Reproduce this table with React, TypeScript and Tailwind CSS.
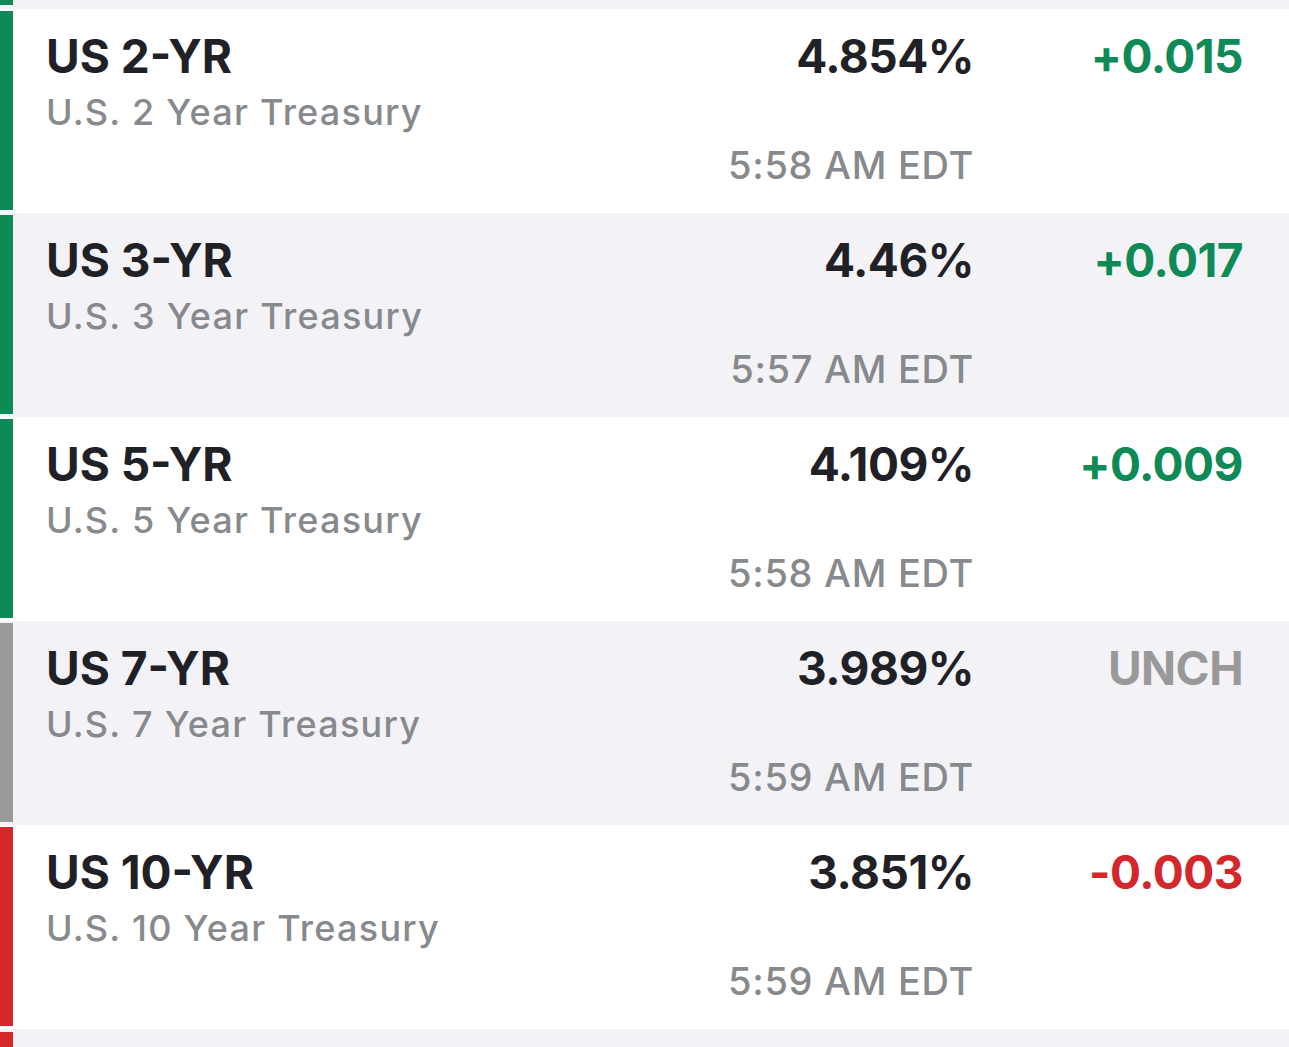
import React from "react";

type Row = {
  sym: string;
  name: string;
  price: string;
  time: string;
  change: string;
  tone: "up" | "down" | "flat";
  bg: "white" | "gray";
};

const rows: Row[] = [
  { sym: "US 2-YR", name: "U.S. 2 Year Treasury", price: "4.854%", time: "5:58 AM EDT", change: "+0.015", tone: "up", bg: "white" },
  { sym: "US 3-YR", name: "U.S. 3 Year Treasury", price: "4.46%", time: "5:57 AM EDT", change: "+0.017", tone: "up", bg: "gray" },
  { sym: "US 5-YR", name: "U.S. 5 Year Treasury", price: "4.109%", time: "5:58 AM EDT", change: "+0.009", tone: "up", bg: "white" },
  { sym: "US 7-YR", name: "U.S. 7 Year Treasury", price: "3.989%", time: "5:59 AM EDT", change: "UNCH", tone: "flat", bg: "gray" },
  { sym: "US 10-YR", name: "U.S. 10 Year Treasury", price: "3.851%", time: "5:59 AM EDT", change: "-0.003", tone: "down", bg: "white" },
];

const barClass = {
  up: "bg-[#0d8a56]",
  down: "bg-[#d3272c]",
  flat: "bg-[#9a9a9a]",
};
const changeClass = {
  up: "text-[#0d8a56]",
  down: "text-[#d3272c]",
  flat: "text-[#999999]",
};

function QuoteRow({ r }: { r: Row }) {
  return (
    <div className={`flex h-[204px] ${r.bg === "white" ? "bg-white" : "bg-[#f3f3f7]"}`}>
      <div className={`w-[13px] mt-[2px] mb-[3px] shrink-0 ${barClass[r.tone]}`} />
      <div className="flex flex-1 pl-[33px] pr-[47px] pt-[21px]">
        <div className="flex flex-col flex-1">
          <div className="text-[46px] leading-[52px] font-bold text-[#1f2126]">{r.sym}</div>
          <div className="mt-[8px] text-[36px] leading-[44px] font-medium tracking-[1.25px] text-[#87898c]">{r.name}</div>
        </div>
        <div className="flex flex-col items-end">
          <div className="-mr-[2px] text-[46px] leading-[52px] font-bold text-[#1f2126] tracking-[-0.5px]">{r.price}</div>
          <div className="mt-[61px] -mr-[2px] text-[38px] leading-[44px] font-medium tracking-[0.7px] text-[#87898c]">{r.time}</div>
        </div>
        <div className="w-[270px] flex justify-end">
          <div className={`-mr-[1px] text-[46px] leading-[52px] font-bold tracking-[-0.5px] ${changeClass[r.tone]}`}>{r.change}</div>
        </div>
      </div>
    </div>
  );
}

export default function App() {
  return (
    <div className="w-[1289px] h-[1047px] overflow-hidden bg-white" style={{ fontFamily: "Inter, 'Noto Sans', sans-serif" }}>
      <div className="flex h-[9px] bg-[#f3f3f7]">
        <div className="w-[13px] h-[5px] bg-[#0d8a56]" />
      </div>
      {rows.map((r) => (
        <QuoteRow key={r.sym} r={r} />
      ))}
      <div className="flex h-[30px] bg-[#f3f3f7]">
        <div className="w-[13px] mt-[3px] h-full bg-[#d3272c]" />
      </div>
    </div>
  );
}
